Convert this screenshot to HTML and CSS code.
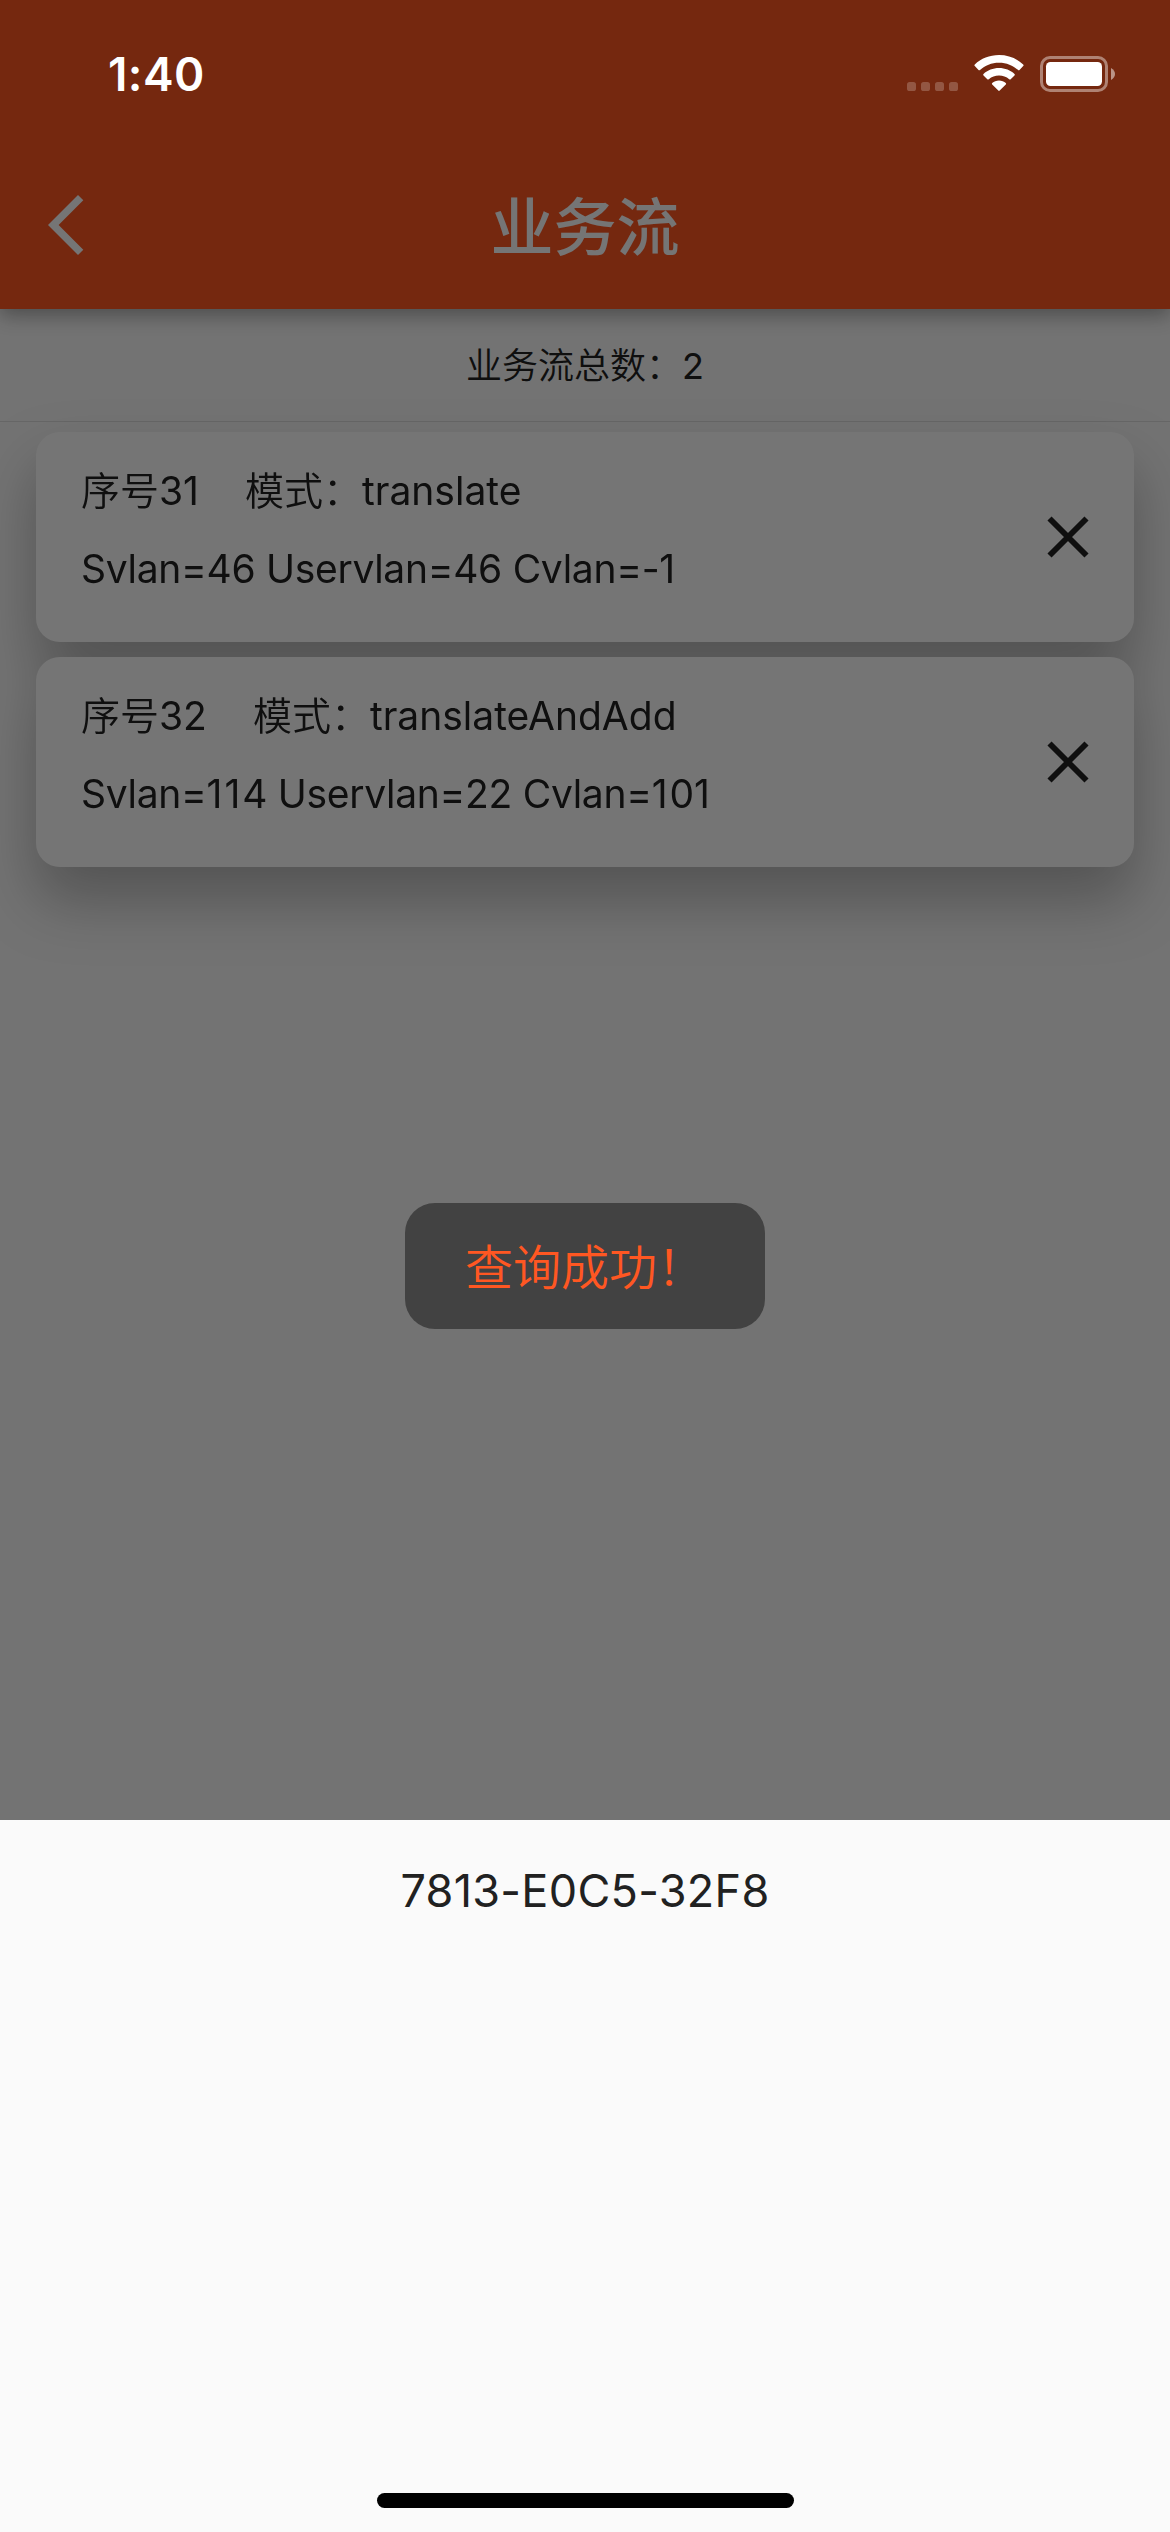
FILE: index.html
```html
<!DOCTYPE html>
<html lang="zh-CN">
<head>
<meta charset="utf-8">
<title>业务流</title>
<link rel="stylesheet" href="styles.css">
</head>
<body>
<div class="screen">
  <main class="page">
    <header class="app-header">
      <div class="status-bar">
        <span class="time">1:40</span>
        <svg class="status-icons" width="216" height="48" viewBox="0 0 216 48">
          <g fill="#fff" fill-opacity=".22">
            <rect x="7" y="32" width="9" height="9" rx="2.6"/>
            <rect x="21" y="32" width="9" height="9" rx="2.6"/>
            <rect x="35" y="32" width="9" height="9" rx="2.6"/>
            <rect x="49" y="32" width="9" height="9" rx="2.6"/>
          </g>
          <g fill="#fff">
            <path d="M99 5C108.500 5 117 8.500 123.200 14.500Q124 15.300 123.200 16.100L119.500 20Q118.800 20.700 118 20C113 15.300 106.500 12.700 99 12.700S85 15.300 80 20Q79.200 20.700 78.500 20L74.800 16.100Q74 15.300 74.800 14.500C81 8.500 89.500 5 99 5Z"/>
            <path d="M99 18C105 18 110.500 20.200 114.500 23.900Q115.300 24.700 114.500 25.500L110.700 29.200Q110 29.900 109.200 29.200C106.300 26.800 102.900 25.500 99 25.500S91.700 26.800 88.800 29.200Q88 29.900 87.300 29.200L83.500 25.500Q82.700 24.700 83.500 23.900C87.500 20.200 93 18 99 18Z"/>
            <path d="M99 30.500C101.700 30.500 104 31.400 105.800 33Q106.500 33.700 105.800 34.400L99.700 40.600Q99 41.300 98.300 40.600L92.200 34.400Q91.500 33.700 92.200 33C94 31.400 96.300 30.500 99 30.500Z"/>
            <rect x="146" y="12" width="56" height="24" rx="4.500"/>
          </g>
          <rect x="141.500" y="7.500" width="65" height="33" rx="8.500" fill="none" stroke="#fff" stroke-opacity=".42" stroke-width="3"/>
          <path d="M211 18Q215 20.500 215 24T211 30Z" fill="#fff" fill-opacity=".5"/>
        </svg>
      </div>
      <div class="nav-bar">
        <svg class="back" width="36" height="60" viewBox="0 0 36 60"><path d="M0 30 30 0 35.300 5.300 10.600 30 35.300 54.700 30 60Z" fill="#fff"/></svg>
        <h1 class="title">业务流</h1>
      </div>
    </header>
    <div class="total"><p>业务流总数：<b>2</b></p></div>
    <section class="flow-list">
      <article class="card">
        <div class="card-text">
          <p class="mode"><span>序号<b>31</b></span><span>模式：<b>translate</b></span></p>
          <p class="vlans">Svlan=46 Uservlan=46 Cvlan=-<span class="one">1</span></p>
        </div>
        <svg class="close" width="42" height="42" viewBox="0 0 42 42"><path d="M2.500 2.500 39.500 39.500M39.500 2.500 2.500 39.500"/></svg>
      </article>
      <article class="card">
        <div class="card-text">
          <p class="mode"><span>序号<b>32</b></span><span>模式：<b>translateAndAdd</b></span></p>
          <p class="vlans">Svlan=<span class="one">11</span>4 Uservlan=22 Cvlan=<span class="one">1</span>01</p>
        </div>
        <svg class="close" width="42" height="42" viewBox="0 0 42 42"><path d="M2.500 2.500 39.500 39.500M39.500 2.500 2.500 39.500"/></svg>
      </article>
    </section>
    <div class="scrim"></div>
    <div class="toast">查询成功！</div>
  </main>
  <footer class="sheet">
    <p class="code">7813-E0C5-32F8</p>
    <div class="home-indicator"></div>
  </footer>
</div>
</body>
</html>
```
FILE: styles.css
```css
* { box-sizing: border-box; }

body, h1, p { margin: 0; }

body {
  font-family: Inter, "Noto Sans CJK SC", sans-serif;
  font-weight: 350;
  color: #212121;
}

b { font-weight: 400; }

svg { display: block; flex: none; }

.screen {
  width: 1170px;
  height: 2532px;
  display: flex;
  flex-direction: column;
  overflow: hidden;
}

.page {
  position: relative;
  height: 1820px;
  background: #fafafa;
  overflow: hidden;
}

.app-header {
  height: 309px;
  background: #ff5722;
  box-shadow: 0 6px 18px rgba(0, 0, 0, .3), 0 3px 30px rgba(0, 0, 0, .06);
}

.status-bar {
  position: relative;
  z-index: 2;
  height: 141px;
  padding: 50px 54px 0 108px;
  display: flex;
  justify-content: space-between;
  align-items: flex-start;
}

.time {
  font-size: 46px;
  line-height: 49px;
  letter-spacing: .4px;
  font-weight: 600;
  color: #fff;
}

.nav-bar {
  height: 168px;
  padding: 0 48px;
  display: grid;
  grid-template-columns: 36px 1fr 36px;
  align-items: center;
}

.title {
  padding-top: 3px;
  font-size: 63px;
  line-height: 80px;
  font-weight: 500;
  color: #fff;
  text-align: center;
}

.total {
  height: 113px;
  padding-bottom: 4px;
  border-bottom: 1px solid #dfdfdf;
  display: flex;
  align-items: center;
  justify-content: center;
  font-size: 36px;
}

.flow-list {
  padding: 10px 36px 0;
  display: flex;
  flex-direction: column;
  gap: 15px;
  filter: drop-shadow(0 33px 30px rgba(0, 0, 0, .27));
}

.card {
  height: 210px;
  padding: 0 45px;
  border-radius: 24px;
  background: #fff;
  display: flex;
  justify-content: space-between;
  align-items: center;
}

.card-text {
  height: 100%;
  padding-top: 20px;
  font-size: 39px;
  line-height: 78px;
  white-space: nowrap;
}

.mode { display: flex; gap: 46px; }

.vlans { font-weight: 400; letter-spacing: -.3px; }

.one { letter-spacing: 2px; }

.close { fill: none; stroke: #212121; stroke-width: 5.800; }

.scrim {
  position: absolute;
  inset: 0;
  z-index: 1;
  background: rgba(0, 0, 0, .54);
}

.toast {
  position: absolute;
  z-index: 2;
  left: 405px;
  top: 1203px;
  width: 360px;
  height: 126px;
  padding: 2px 0 0 60px;
  border-radius: 30px;
  background: #424242;
  color: #ff5722;
  font-size: 48px;
  line-height: 126px;
}

.sheet {
  flex: 1;
  background: #fafafa;
  display: flex;
  flex-direction: column;
  align-items: center;
  justify-content: space-between;
  padding: 41px 0 24px;
}

.code {
  font-size: 45px;
  line-height: 60px;
  font-weight: 400;
  letter-spacing: .3px;
}

.home-indicator {
  width: 417px;
  height: 15px;
  border-radius: 8px;
  background: #000;
}
```
